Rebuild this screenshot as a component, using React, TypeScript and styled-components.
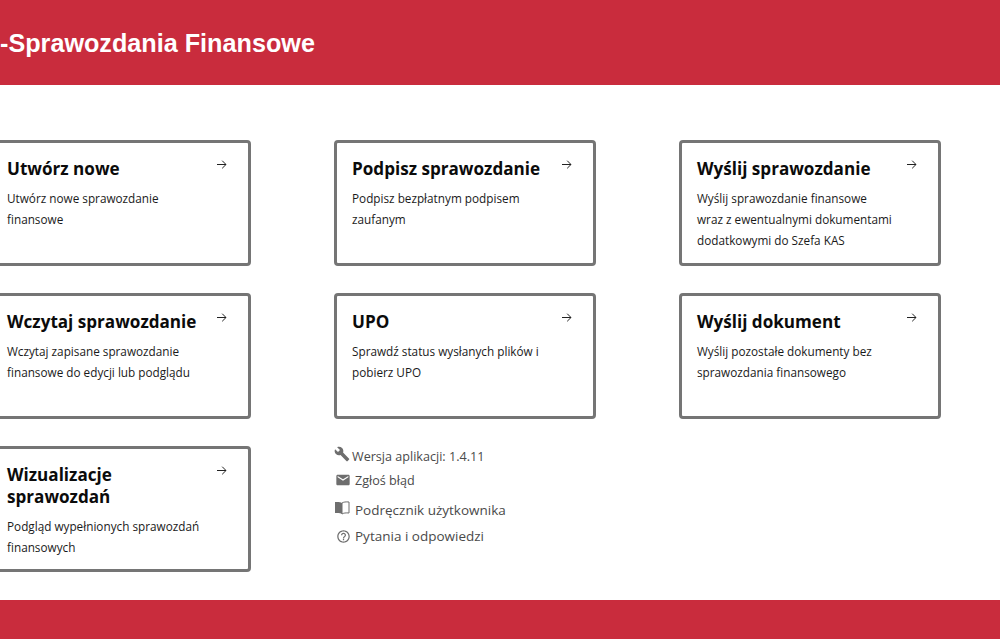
import React from "react";
import styled, { createGlobalStyle } from "styled-components";
import { MdBuild, MdEmail, MdOutlineHelpOutline } from "react-icons/md";

const GlobalStyle = createGlobalStyle`
  html, body {
    margin: 0;
    padding: 0;
    background: #fff;
    overflow: hidden;
  }
  body {
    font-family: "Open Sans", "Noto Sans", sans-serif;
    color: #111;
  }
`;

const Page = styled.div`
  display: flex;
  flex-direction: column;
  width: 1000px;
  height: 639px;
  overflow: hidden;
`;

const Header = styled.header`
  display: flex;
  align-items: center;
  flex: 0 0 85px;
  padding-top: 1px;
  box-sizing: border-box;
  background: #c92c3d;
`;

const Title = styled.h1`
  margin: 0;
  font-family: "Liberation Sans", Arial, sans-serif;
  font-size: 25.2px;
  font-weight: 700;
  color: #fff;
`;

const Main = styled.main`
  flex: 1;
  padding-top: 55px;
`;

const Grid = styled.div`
  display: grid;
  grid-template-columns: repeat(3, 262px);
  grid-auto-rows: 126px;
  column-gap: 83px;
  row-gap: 27px;
  margin-left: -11px;
`;

const Card = styled.a`
  position: relative;
  display: block;
  box-sizing: border-box;
  padding: 15px 15px 0;
  border: 3px solid #757575;
  border-radius: 4px;
  background: #fff;
  color: #111;
`;

const CardTitle = styled.h2`
  margin: 0 0 8px;
  padding-right: 16px;
  font-size: 17.1px;
  line-height: 22px;
  font-weight: 700;
  color: #0b0b0b;
`;

const CardText = styled.p`
  margin: 0;
  font-size: 11.75px;
  line-height: 21px;
  color: #1a1a1a;
`;

const Arrow = styled.svg`
  position: absolute;
  top: 16px;
  right: 21px;
  width: 11px;
  height: 11px;
  fill: none;
  stroke: #222;
  stroke-width: 1;
`;

const Links = styled.div`
  display: flex;
  flex-direction: column;
  margin-top: -2px;
`;

const LinkRow = styled.div<{ $size: number; $height: number; $gap: number }>`
  display: flex;
  align-items: center;
  gap: ${({ $gap }) => $gap}px;
  height: ${({ $height }) => $height}px;
  font-size: ${({ $size }) => $size}px;
  color: #4a4a4a;
`;

const IconSlot = styled.span<{ $lift: number; $inset: number }>`
  display: flex;
  flex: none;
  width: 16px;
  justify-content: center;
  margin-top: -${({ $lift }) => $lift}px;
  padding-left: ${({ $inset }) => $inset}px;
  color: #6e6e6e;
`;

const cards = [
  { title: "Utwórz nowe", text: ["Utwórz nowe sprawozdanie", "finansowe"] },
  { title: "Podpisz sprawozdanie", text: ["Podpisz bezpłatnym podpisem", "zaufanym"] },
  {
    title: "Wyślij sprawozdanie",
    text: ["Wyślij sprawozdanie finansowe", "wraz z ewentualnymi dokumentami", "dodatkowymi do Szefa KAS"],
  },
  { title: "Wczytaj sprawozdanie", text: ["Wczytaj zapisane sprawozdanie", "finansowe do edycji lub podglądu"] },
  { title: "UPO", text: ["Sprawdź status wysłanych plików i", "pobierz UPO"] },
  { title: "Wyślij dokument", text: ["Wyślij pozostałe dokumenty bez", "sprawozdania finansowego"] },
  { title: "Wizualizacje sprawozdań", text: ["Podgląd wypełnionych sprawozdań", "finansowych"] },
];

const Footer = styled.footer`
  flex: 0 0 39px;
  background: #c92c3d;
`;

const BookIcon = () => (
  <svg width="16" height="14" viewBox="0 0 16 14">
    <path d="M8 2C6.6 1 4 .7 1 1v11c3-.3 5.6 0 7 1z" fill="currentColor" />
    <path d="M8 2c1.400-1 4-1.300 7-1v11c-3-.3-5.600 0-7 1z" fill="none" stroke="currentColor" />
  </svg>
);

export default function App() {
  return (
    <Page>
      <GlobalStyle />
      <Header>
        <Title>-Sprawozdania Finansowe</Title>
      </Header>
      <Main>
        <Grid>
          {cards.map((card) => (
            <Card key={card.title}>
              <CardTitle>{card.title}</CardTitle>
              <CardText>
                {card.text.map((line) => (
                  <React.Fragment key={line}>
                    {line}
                    <br />
                  </React.Fragment>
                ))}
              </CardText>
              <Arrow viewBox="0 0 11 11">
                <path d="M1 5.500h9M6.200 1.700 10 5.500 6.200 9.300" />
              </Arrow>
            </Card>
          ))}
          <Links>
            <LinkRow $size={12.6} $height={24} $gap={2}>
              <IconSlot $lift={4} $inset={0}>
                <MdBuild size={16} />
              </IconSlot>
              Wersja aplikacji: 1.4.11
            </LinkRow>
            <LinkRow $size={12.6} $height={24} $gap={4}>
              <IconSlot $lift={0} $inset={1}>
                <MdEmail size={16} />
              </IconSlot>
              Zgłoś błąd
            </LinkRow>
            <LinkRow $size={13.5} $height={36} $gap={5}>
              <IconSlot $lift={4} $inset={0}>
                <BookIcon />
              </IconSlot>
              Podręcznik użytkownika
            </LinkRow>
            <LinkRow $size={13.5} $height={16} $gap={4}>
              <IconSlot $lift={0} $inset={1}>
                <MdOutlineHelpOutline size={15} />
              </IconSlot>
              Pytania i odpowiedzi
            </LinkRow>
          </Links>
        </Grid>
      </Main>
      <Footer />
    </Page>
  );
}
